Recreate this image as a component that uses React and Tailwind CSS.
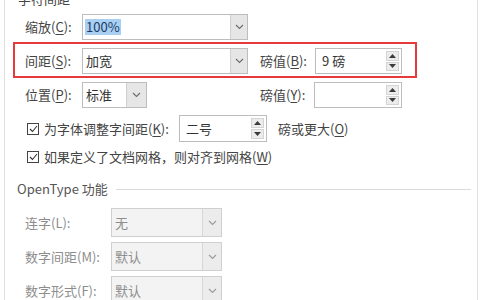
import React from 'react';

const font = { fontFamily: '"Noto Sans CJK SC", "Noto Sans", sans-serif' };

function Chevron({ color = '#6b6b6b' }) {
  return (
    <svg width="9" height="6" viewBox="0 0 9 6" fill="none">
      <polyline points="1,1 4.5,4.5 8,1" stroke={color} strokeWidth="1.1" />
    </svg>
  );
}

function Combo({ width, text, disabled, btnWidth = 17, highlight }) {
  return (
    <div
      className={`flex h-full border ${disabled ? 'border-[#cfcfcf] bg-[#f3f3f3]' : 'border-[#bdbdbd] bg-white'}`}
      style={{ width }}
    >
      <div className={`flex-1 flex items-center pl-[2px] ${disabled ? 'text-[#8d8d8d]' : 'text-[#333]'}`}>
        {highlight ? (
          <span className="bg-[#a9cff2] text-[#1b3b66] px-[1px] leading-[16px]">{text}</span>
        ) : (
          <span className="pl-[1px]">{text}</span>
        )}
      </div>
      <div
        className={`flex items-center justify-center border-l ${disabled ? 'border-[#d6d6d6] bg-[#ececec]' : 'border-[#d0d0d0] bg-[#e6e6e6]'}`}
        style={{ width: btnWidth }}
      >
        <Chevron color={disabled ? '#9a9a9a' : '#6b6b6b'} />
      </div>
    </div>
  );
}

function Arrow({ up }) {
  return (
    <svg width="7" height="4" viewBox="0 0 7 4">
      <polygon points={up ? '0,4 3.5,0 7,4' : '0,0 3.5,4 7,0'} fill="#3a3a3a" />
    </svg>
  );
}

function Spin({ width, text }) {
  return (
    <div className="flex h-full border border-[#bdbdbd] bg-white" style={{ width }}>
      <div className="flex-1 flex items-center pl-[6px] text-[#333]">{text}</div>
      <div className="flex flex-col w-[15px] py-[2px] pr-[2px] gap-[1px]">
        <div className="flex-1 flex items-center justify-center bg-[#ececec] border border-[#d4d4d4]">
          <Arrow up />
        </div>
        <div className="flex-1 flex items-center justify-center bg-[#ececec] border border-[#d4d4d4]">
          <Arrow />
        </div>
      </div>
    </div>
  );
}

function Label({ children, width, disabled }) {
  return (
    <div
      className={`flex items-center shrink-0 ${disabled ? 'text-[#8d8d8d]' : 'text-[#444]'}`}
      style={{ width }}
    >
      {children}
    </div>
  );
}

function Check() {
  return (
    <div className="w-[12px] h-[12px] border border-[#444] bg-white flex items-center justify-center shrink-0">
      <svg width="9" height="8" viewBox="0 0 9 8" fill="none">
        <polyline points="1,4 3.5,6.5 8,1" stroke="#333" strokeWidth="1.1" />
      </svg>
    </div>
  );
}

const U = ({ children }) => <span className="underline underline-offset-2">{children}</span>;

export default function App() {
  return (
    <div className="w-[480px] h-[300px] overflow-hidden bg-white pl-[4px] pr-[2px] text-[13px]" style={font}>
      <div className="h-[320px] border-x border-[#e0e0e0] flex flex-col">
        {/* group title, cut off by the top edge like in the screenshot */}
        <div className="-mt-[9px] h-[16px] leading-[16px] pl-[13px] text-[#444]">字符间距</div>

        {/* 缩放 */}
        <div className="mt-[7px] h-[26px] flex pl-[20px]">
          <Label width={57}>缩放(<U>C</U>):</Label>
          <Combo width={166} text="100%" highlight />
        </div>

        {/* 间距 — red frame */}
        <div className="mt-[2px] ml-[8px] w-[404px] border-2 border-[#e5393b] pt-[4px] pb-[2px]">
          <div className="h-[26px] flex pl-[10px]">
            <Label width={57}>间距(<U>S</U>):</Label>
            <Combo width={166} text="加宽" />
            <div className="w-[12px]" />
            <Label width={55}>磅值(<U>B</U>):</Label>
            <Spin width={87} text="9 磅" />
          </div>
        </div>

        {/* 位置 */}
        <div className="mt-[4px] h-[26px] flex pl-[20px]">
          <Label width={57}>位置(<U>P</U>):</Label>
          <Combo width={65} text="标准" btnWidth={20} />
          <div className="w-[113px]" />
          <Label width={54}>磅值(<U>Y</U>):</Label>
          <Spin width={88} text="" />
        </div>

        {/* kerning */}
        <div className="mt-[7px] h-[27px] flex items-center pl-[22px]">
          <Check />
          <div className="ml-[5px] w-[135px] text-[#444]">为字体调整字间距(<U>K</U>):</div>
          <div className="h-full">
            <Spin width={88} text="二号" />
          </div>
          <div className="ml-[11px] text-[#444]">磅或更大(<U>O</U>)</div>
        </div>

        {/* grid */}
        <div className="mt-[5px] h-[20px] flex items-center pl-[22px]">
          <Check />
          <div className="ml-[5px] text-[#444]">如果定义了文档网格，则对齐到网格(<U>W</U>)</div>
        </div>

        {/* OpenType group */}
        <div className="mt-[12px] h-[20px] flex items-center pl-[12px] pr-[6px]">
          <span className="text-[#555]">OpenType 功能</span>
          <div className="flex-1 ml-[8px] border-t border-[#dcdcdc]" />
        </div>

        <div className="mt-[9px] h-[29px] flex pl-[20px]">
          <Label width={86} disabled>连字(L):</Label>
          <Combo width={111} text="无" disabled btnWidth={19} />
        </div>
        <div className="mt-[5px] h-[29px] flex pl-[20px]">
          <Label width={86} disabled>数字间距(M):</Label>
          <Combo width={111} text="默认" disabled btnWidth={19} />
        </div>
        <div className="mt-[5px] h-[29px] flex pl-[20px]">
          <Label width={86} disabled>数字形式(F):</Label>
          <Combo width={111} text="默认" disabled btnWidth={19} />
        </div>
      </div>
    </div>
  );
}
